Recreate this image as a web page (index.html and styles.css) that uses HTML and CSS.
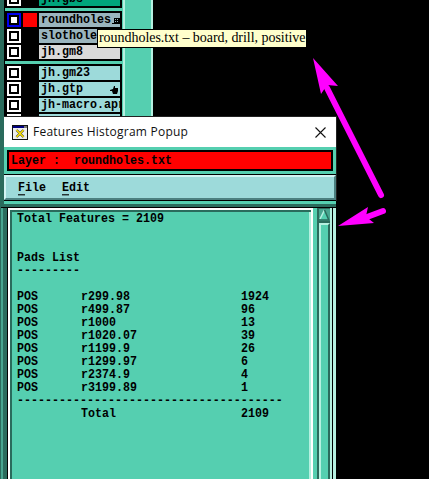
FILE: index.html
```html
<!DOCTYPE html>
<html lang="en">
<head>
<meta charset="utf-8">
<title>Features Histogram Popup</title>
<link rel="stylesheet" href="styles.css">
</head>
<body>
<main class="desktop">
  <aside class="layers">
    <div class="layer-list">
      <div class="group group-top">
        <div class="row"><i class="check"></i><i class="swatch"></i><span class="name green"><b>jh.gbs</b></span></div>
      </div>
      <div class="group">
        <div class="row"><i class="check active"></i><i class="swatch red"></i><span class="name slate"><b>roundholes</b><svg class="mark" width="8" height="8" viewBox="0 0 8 8" shape-rendering="crispEdges"><path d="M2 1h6v6H2zM0 6h2v1H0z"/><path fill="#9bb5be" d="M3 2h1v1H3zM5 2h1v1H5zM3 4h1v1H3zM5 4h1v1H5z"/></svg></span></div>
        <div class="row"><i class="check"></i><i class="swatch"></i><span class="name slate"><b>slothole</b></span></div>
        <div class="row"><i class="check"></i><i class="swatch"></i><span class="name gray"><b>jh.gm8</b></span></div>
      </div>
      <div class="group">
        <div class="row"><i class="check"></i><i class="swatch"></i><span class="name"><b>jh.gm23</b></span></div>
        <div class="row"><i class="check"></i><i class="swatch"></i><span class="name"><b>jh.gtp</b><svg class="hand" width="8" height="8" viewBox="0 0 8 8"><path d="M0 4 3 3 4 0 5 0 5 2 8 2 8 5 7 8H3L2 5H0z"/></svg></span></div>
        <div class="row"><i class="check"></i><i class="swatch"></i><span class="name"><b>jh-macro.apr</b></span></div>
        <div class="row"><i class="check"></i><i class="swatch"></i><span class="name"></span></div>
      </div>
    </div>
    <div class="rail"></div>
  </aside>

  <div class="tooltip"><span>roundholes.txt – board, drill, positive</span></div>

  <section class="popup">
    <header class="titlebar">
      <svg class="app-icon" width="16" height="15" viewBox="0 0 16 15"><path fill="#111" d="M0 0h16v15H0z"/><path fill="#eee" d="M1 1h14v13H1z"/><path fill="#000080" d="M1 1h11v2H1z"/><path fill="#777" d="M12 1h3v2h-3z"/><path d="m4.5 5 7 7m0-7-7 7" stroke="#333" stroke-width="2.4"/><path d="m4.5 5 7 7m0-7-7 7" stroke="#ffe600" stroke-width="1.5"/></svg>
      <span class="title">Features Histogram Popup</span>
      <svg class="close" width="11" height="11" viewBox="0 0 11 11"><path d="m.5.5 10 10m0-10-10 10" stroke="#111" stroke-width="1.1"/></svg>
    </header>
    <div class="layer-wrap"><div class="layer-field"><b>Layer :  roundholes.txt</b></div></div>
    <nav class="menubar"><b><u>F</u>ile</b><b><u>E</u>dit</b></nav>
  </section>

  <section class="report-frame">
    <div class="frame-top"></div>
    <div class="frame-body">
      <div class="report">
        <p><b>Total Features = 2109</b></p><p></p><p></p>
        <p><b>Pads List</b></p>
        <p><b>---------</b></p><p></p>
        <p><b>POS</b><b>r299.98</b><b>1924</b></p>
        <p><b>POS</b><b>r499.87</b><b>96</b></p>
        <p><b>POS</b><b>r1000</b><b>13</b></p>
        <p><b>POS</b><b>r1020.07</b><b>39</b></p>
        <p><b>POS</b><b>r1199.9</b><b>26</b></p>
        <p><b>POS</b><b>r1299.97</b><b>6</b></p>
        <p><b>POS</b><b>r2374.9</b><b>4</b></p>
        <p><b>POS</b><b>r3199.89</b><b>1</b></p>
        <p><b>--------------------------------------</b></p>
        <p><b></b><b>Total</b><b>2109</b></p>
      </div>
      <div class="scrollbar">
        <svg width="15" height="15" viewBox="0 0 15 15"><path fill="#2a6b5c" d="M0 0h13v15H0z"/><path fill="#b5f0e0" d="M13 0h2v15h-2z"/><path fill="#47a58f" d="M2 1h11v12H2z"/><path fill="#55cfb0" d="m7.5 2 4.5 10H3z"/><path d="M7.5 2 3 11" stroke="#b5f0e0" stroke-width="1.6"/><path d="m7.5 2 4.3 10H2" fill="none" stroke="#2a6b5c" stroke-width="1.5"/></svg>
        <div class="thumb"></div>
      </div>
      <div class="frame-edge"></div>
    </div>
  </section>

  <svg class="arrows" width="429" height="479" viewBox="0 0 429 479"><g fill="#f0f"><path d="m313 58 25 28-11-1-6 9z"/><path d="M338 226 368 207 366 216 369 219 374 223z"/></g><path d="m327 88 54 107M367 217l16-6" fill="none" stroke="#f0f" stroke-width="6" stroke-linecap="round"/></svg>
</main>
</body>
</html>
```
FILE: styles.css
```css
*, *::before { box-sizing: border-box; }
body { margin: 0; background: #000; }
p { margin: 0; }
b {
  display: block;
  font: bold 11.665px/11px "Liberation Mono", monospace;
  white-space: pre;
  transform: scaleY(1.12);
  transform-origin: 50% 9px;
}
.desktop { position: relative; width: 429px; height: 479px; overflow: hidden; background: #000; }
.layers {
  display: flex;
  width: 153px;
  height: 479px;
  background: #55cfb0;
  border-left: 4px solid #2a6b5c;
}
.layer-list { width: 119px; border-left: 1px solid #000; height: 479px; }
.group {
  display: flex;
  flex-direction: column;
  gap: 2px;
  width: 117px;
  padding: 2px;
  margin-bottom: 3px;
  background: #000;
}
.group-top { height: 8px; padding-top: 0; overflow: hidden; justify-content: flex-end; }
.row { display: flex; gap: 2px; height: 14px; flex: none; }
.check { width: 14px; border: 2px solid #fff; background: #fff; display: grid; place-items: center; }
.check::before { content: ""; width: 10px; height: 10px; border: 2px solid #000; background: #fff; }
.check.active { border-color: #0000f0; }
.swatch { width: 14px; background: #000; }
.swatch.red { background: #f00; }
.name { position: relative; width: 81px; padding: 2px 0 0 2px; overflow: hidden; background: #9ddada; }
.name.green { background: #00a57c; }
.name.slate { background: #9bb5be; }
.name.gray { background: #dadada; }
.mark { position: absolute; right: 0; top: 4px; }
.hand { position: absolute; right: 2px; top: 4px; }
.rail { width: 30px; border-left: 2px solid #b5f0e0; border-right: 2px solid #b5f0e0; }
.tooltip {
  position: absolute;
  left: 97px;
  top: 29px;
  width: 210px;
  height: 19px;
  padding-left: 1px;
  border: 1px solid #000;
  background: #ffc;
  font: 14px/16px "Liberation Serif", serif;
  letter-spacing: -.04px;
  white-space: nowrap;
}
.popup { position: absolute; left: 4px; top: 116px; width: 333px; height: 85px; background: #55cfb0; border: solid #222; border-width: 1px 1px 0 0; }
.titlebar { display: flex; align-items: center; height: 30px; padding: 0 10px 0 8px; background: #fff; }
.title { margin-left: 5px; font: 12px/18px "Open Sans", sans-serif; letter-spacing: .23px; color: #111; }
.close { margin-left: auto; }
.layer-wrap { height: 28px; padding: 3px 3px 0; }
.layer-field { width: 326px; height: 21px; padding: 4px 2px; border: 2px solid #000; background: #f00; }
.menubar {
  display: flex;
  gap: 16px;
  height: 25px;
  padding: 6px 12px 0;
  background: #9ddada;
  border: 2px solid;
  border-color: #d4f4f4 #4c8080 #4c8080 #d4f4f4;
  box-shadow: 0 -1px #000, 0 1px #000;
}
.menubar u { text-underline-offset: 3px; text-decoration-thickness: 1px; }
.report-frame { position: absolute; left: 0; top: 201px; width: 336px; height: 278px; background: #55cfb0; border-left: 1px solid #2a6b5c; }
.frame-top { height: 6px; background: linear-gradient(#55cfb0 50%, #2a6b5c 50%); box-shadow: inset 3px 0 #2a6b5c; }
.frame-body { display: flex; height: 272px; padding-left: 2px; background: #47a58f; border-top: 1px solid #000; }
.report {
  flex: none;
  width: 305px;
  margin-left: 5px;
  padding-left: 5px;
  background: #55cfb0;
  border: 2px solid #fff;
  border-bottom: 0;
  box-shadow: inset 2px 2px #2a6b5c, inset -2px 0 #b5f0e0, -1px 0 #000, -5px 0 #2a6b5c;
}
.report p { display: flex; height: 13px; margin-left: 2px; }
.report p:first-child { margin-top: 4px; }
.report p b { flex: none; }
.report p b:first-child:not(:last-child) { width: 64px; }
.report p b:nth-child(2) { width: 160px; }
.scrollbar { flex: none; width: 19px; padding-left: 4px; background: #55cfb0; box-shadow: inset -2px 0 #b5f0e0; }
.scrollbar svg { display: block; }
.thumb { width: 11px; height: 260px; border: solid; border-width: 2px 2px 0 2px; border-color: #b5f0e0 #2a6b5c #2a6b5c #b5f0e0; margin-left: 2px; box-shadow: -2px 0 #2a6b5c; }
.frame-edge { width: 4px; background: #b5f0e0; border-left: 1px solid #000; }
.arrows { position: absolute; left: 0; top: 0; }
```
